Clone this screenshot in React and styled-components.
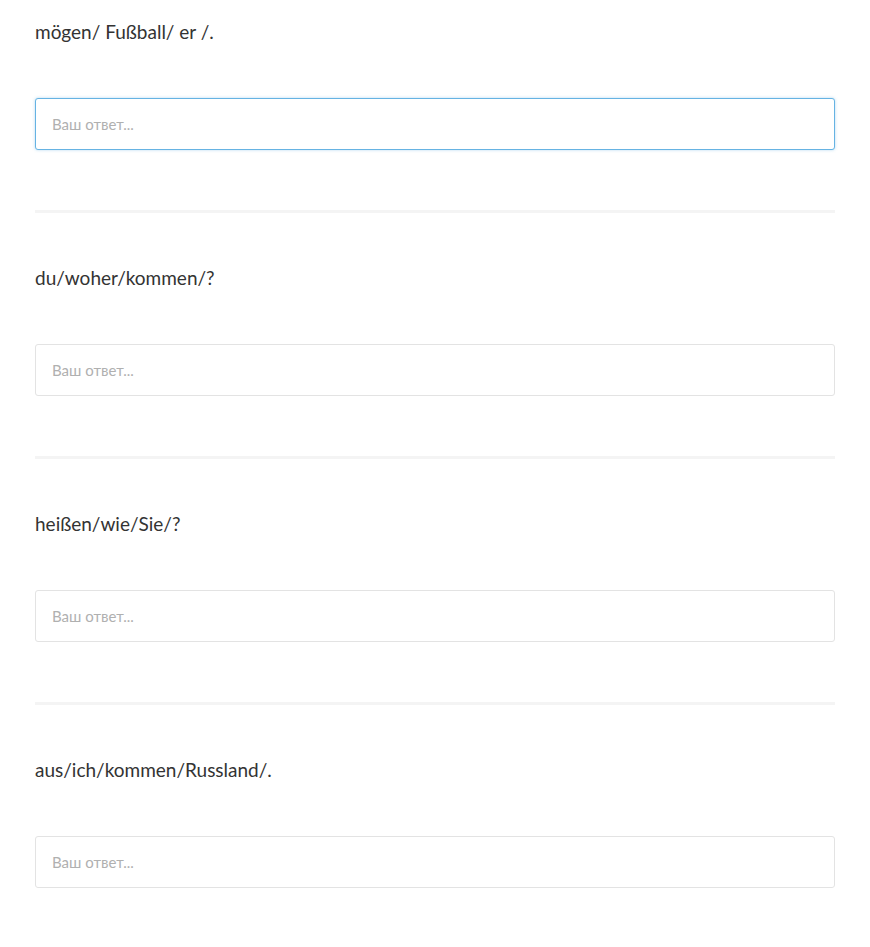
import React from "react";
import styled, { createGlobalStyle } from "styled-components";

const Global = createGlobalStyle`
  html, body { margin: 0; padding: 0; background: #fff; }
  body { font-family: Lato, "Open Sans", sans-serif; }
`;

const Page = styled.div`
  padding: 20px 35px 0 35px;
  display: flex;
  flex-direction: column;
`;

const Item = styled.div`
  display: flex;
  flex-direction: column;
`;

const Question = styled.div`
  font-size: 19px;
  line-height: 24px;
  color: #333;
  margin-bottom: 54px;
`;

const Answer = styled.input`
  box-sizing: border-box;
  width: 100%;
  height: 52px;
  margin: 0;
  padding: 0 16px;
  border-radius: 3px;
  border: 1px solid ${(p) => (p.$focused ? "#66b3e3" : "#e3e3e3")};
  box-shadow: ${(p) => (p.$focused ? "0 0 3px rgba(102,179,227,0.5)" : "none")};
  font-family: Lato, "Open Sans", sans-serif;
  font-size: 15px;
  color: #333;
  outline: none;
  &::placeholder { color: #b0b0b0; }
`;

const Divider = styled.div`
  height: 3px;
  background: #f4f4f4;
  margin: 60px 0 53px 0;
`;

const items = [
  "mögen/ Fußball/ er /.",
  "du/woher/kommen/?",
  "heißen/wie/Sie/?",
  "aus/ich/kommen/Russland/.",
];

export default function App() {
  return (
    <>
      <Global />
      <Page>
        {items.map((q, i) => (
          <Item key={i}>
            <Question>{q}</Question>
            <Answer placeholder="Ваш ответ..." $focused={i === 0} />
            {i < items.length - 1 && <Divider />}
          </Item>
        ))}
      </Page>
    </>
  );
}
